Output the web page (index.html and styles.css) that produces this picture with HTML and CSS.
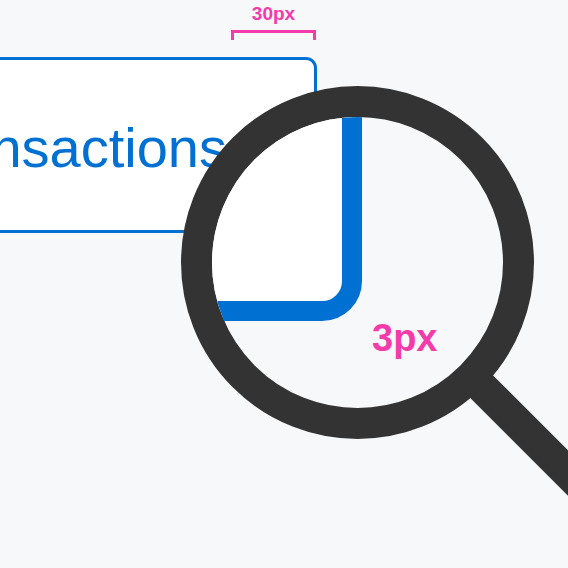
FILE: index.html
```html
<!DOCTYPE html>
<html lang="en">
<head>
    <meta charset="UTF-8">
    <meta name="viewport" content="width=device-width, initial-scale=1.0">
    <title>Button border detail</title>
    <link rel="stylesheet" href="styles.css">
</head>
<body>
    <div class="measure">
        <div class="measure-label">30px</div>
        <div class="measure-bracket"></div>
    </div>

    <div class="button">Transactions</div>

    <!-- Magnifier sits over the button -->
    <div class="magnifier">
        <svg class="handle" width="98" height="130" viewBox="0 0 98 130">
            <line x1="0" y1="0" x2="130" y2="130" stroke="#333" stroke-width="32"/>
        </svg>
        <div class="lens">
            <div class="lens-button"></div>
            <div class="lens-label">3px</div>
        </div>
    </div>
</body>
</html>
```

FILE: styles.css
```css
html, body {
    margin: 0;
    height: 100%;
}

body {
    position: relative;
    overflow: hidden;
    background-color: #f7f8fa;
    font-family: "Liberation Sans", Arial, sans-serif;
}

.measure {
    box-sizing: border-box;
    width: 85px;
    height: 57px;
    margin-left: 231px;
    padding-top: 3px;
}

.measure-label {
    margin: 0 -10px;
    height: 27px;
    line-height: 22px;
    font-size: 19px;
    font-weight: bold;
    text-align: center;
    color: #f53aa9;
}

.measure-bracket {
    box-sizing: border-box;
    height: 10px;
    border: 3px solid #f53aa9;
    border-bottom: none;
}

.button {
    box-sizing: border-box;
    display: flex;
    align-items: center;
    justify-content: flex-end;
    width: 500px;
    height: 176px;
    margin-left: -183px;
    padding-top: 4px;
    padding-right: 87px;
    background: white;
    border: 3px solid #0070d2;
    border-radius: 11px;
    font-size: 56px;
    color: #0070d2;
}

.magnifier {
    position: absolute;
    left: 181px;
    top: 86px;
    width: 353px;
    height: 353px;
}

.handle {
    position: absolute;
    left: 289px;
    top: 289px;
}

.lens {
    position: relative;
    box-sizing: border-box;
    width: 100%;
    height: 100%;
    overflow: hidden;
    background-color: #f7f8fa;
    border: 31px solid #333;
    border-radius: 50%;
}

.lens-button {
    position: absolute;
    right: 141px;
    bottom: 87px;
    width: 400px;
    height: 400px;
    box-sizing: border-box;
    background: white;
    border: 20px solid #0070d2;
    border-radius: 40px;
}

.lens-label {
    position: absolute;
    left: 160px;
    top: 198px;
    line-height: 46px;
    font-size: 38px;
    font-weight: bold;
    color: #f53aa9;
}
```
